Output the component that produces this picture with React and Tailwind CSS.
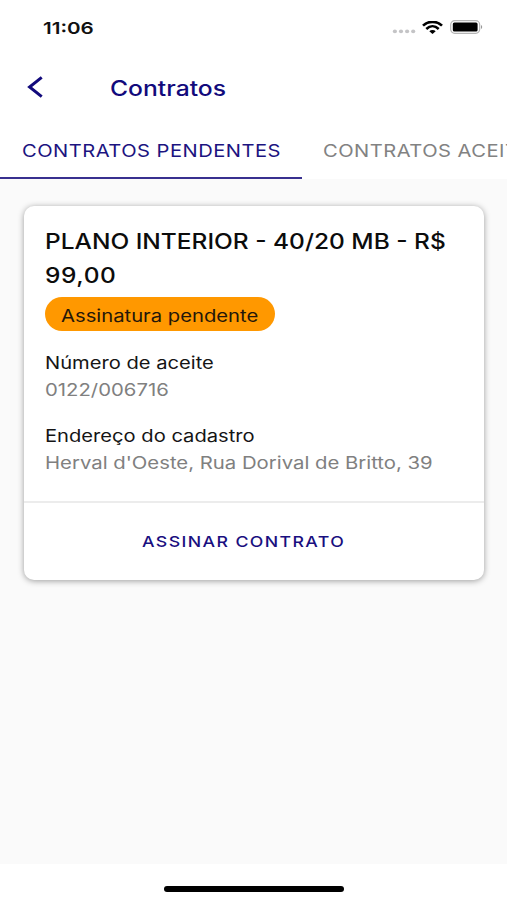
const details = [
  { label: "Número de aceite", value: "0122/006716" },
  { label: "Endereço do cadastro", value: "Herval d'Oeste, Rua Dorival de Britto, 39" },
];

const StatusBar = () => {
  return (
    <div className="flex h-[54px] items-center justify-between pl-[43px] pr-[24px]">
      <span className="origin-left scale-x-[1.25] pt-[2px] text-[16.5px] font-semibold leading-none">11:06</span>
      <div className="flex items-center">
        <svg className="h-4 w-[24px]" viewBox="0 0 24 16" fill="#c4c4c6">
          <ellipse cx="2.9" cy="12.4" rx="2.1" ry="1.8" />
          <ellipse cx="9" cy="12.4" rx="2.1" ry="1.8" />
          <ellipse cx="15.1" cy="12.4" rx="2.1" ry="1.8" />
          <ellipse cx="21.2" cy="12.4" rx="2.1" ry="1.8" />
        </svg>
        <svg className="ml-[6px] h-[13px] w-[21px]" viewBox="0 0 21 13" fill="none" stroke="#000">
          <path d="M1 4.6C6 -0.4 15 -0.4 20 4.6" strokeWidth="2.6" />
          <path d="M4.3 8C8 4.4 13 4.4 16.7 8" strokeWidth="2.5" />
          <path d="M7.3 10.2C9 8.6 12 8.6 13.7 10.2L10.5 13Z" fill="#000" stroke="none" />
        </svg>
        <svg className="ml-[7px] h-[14px] w-[33px]" viewBox="0 0 33 14">
          <rect x="0.7" y="0.7" width="29" height="12.6" rx="4" fill="none" stroke="#b5b5b5" strokeWidth="1.2" />
          <rect x="2.8" y="2.5" width="24.8" height="9" rx="1.6" fill="#000" />
          <path d="M31 5V9C32.6 8.4 32.6 5.6 31 5Z" fill="#999" />
        </svg>
      </div>
    </div>
  );
};

const Header = () => {
  return (
    <header className="flex h-[67px] items-center pl-[27px] text-[#120a7c]">
      <svg className="mb-px h-[22px] w-[17px]" viewBox="0 0 17 22" fill="none" stroke="currentColor" strokeWidth="3">
        <path d="M14.7 1.4L2.6 11L14.7 20.6" />
      </svg>
      <h1 className="ml-[66px] origin-left scale-x-[1.175] pt-px text-[21px] font-medium leading-none">Contratos</h1>
    </header>
  );
};

const Tabs = () => {
  return (
    <nav className="flex h-[58px] text-[17px] leading-none whitespace-nowrap">
      <button className="flex w-[302px] shrink-0 items-center border-b-2 border-[#38308f] pl-[22px] pt-[5px] text-[#1c1480]">
        <span className="origin-left scale-x-[1.185] tracking-[0.4px]">CONTRATOS PENDENTES</span>
      </button>
      <button className="flex shrink-0 items-center border-b-2 border-transparent pl-[21px] pt-[5px] text-[#828282]">
        <span className="origin-left scale-x-[1.185] tracking-[0.4px]">CONTRATOS ACEITOS</span>
      </button>
    </nav>
  );
};

const ContractCard = () => {
  return (
    <section className="rounded-[10px] bg-white shadow-[0_1px_6px_rgba(0,0,0,0.38)]">
      <div className="h-[297px] border-b-2 border-[#ececec] pl-[21px] pt-[19px] whitespace-nowrap">
        <h2 className="w-fit origin-left scale-x-[1.165] text-[21px] font-medium leading-[34px] text-[#0c0c0c]">
          PLANO INTERIOR - 40/20 MB - R$
          <br />
          <span className="tracking-[0.5px]">99,00</span>
        </h2>
        <div className="mt-[4px] flex h-[34px] w-[230px] items-center rounded-full bg-[#ff9800] pl-[16px] pt-[4px]">
          <span className="origin-left scale-x-[1.19] text-[17px] leading-none text-[#24170a]">Assinatura pendente</span>
        </div>
        <dl className="mt-[18px] flex flex-col gap-[17px] text-[17px] leading-[28px]">
          {details.map((item) => (
            <div key={item.label}>
              <dt className="w-fit origin-left scale-x-[1.185] text-[#151515]">{item.label}</dt>
              <dd className="-mt-px mb-px w-fit origin-left scale-x-[1.195] text-[#808080]">{item.value}</dd>
            </div>
          ))}
        </dl>
      </div>
      <button className="flex h-[77px] w-full items-center pl-[118px] text-[#190f80]">
        <span className="origin-left scale-x-[1.18] text-[15px] font-medium leading-none tracking-[1.18px] whitespace-nowrap">
          ASSINAR CONTRATO
        </span>
      </button>
    </section>
  );
};

const App = () => {
  return (
    <div className="flex h-[900px] w-[507px] flex-col overflow-hidden bg-white font-['Inter',sans-serif] text-[#111]">
      <StatusBar />
      <Header />
      <Tabs />
      <main className="flex-1 bg-[#fafafa] pl-[24px] pr-[23px] pt-[27px]">
        <ContractCard />
      </main>
      <footer className="flex h-[36px] justify-center pt-[22px]">
        <div className="h-[6px] w-[180px] rounded-full bg-black" />
      </footer>
    </div>
  );
};

export default App;
